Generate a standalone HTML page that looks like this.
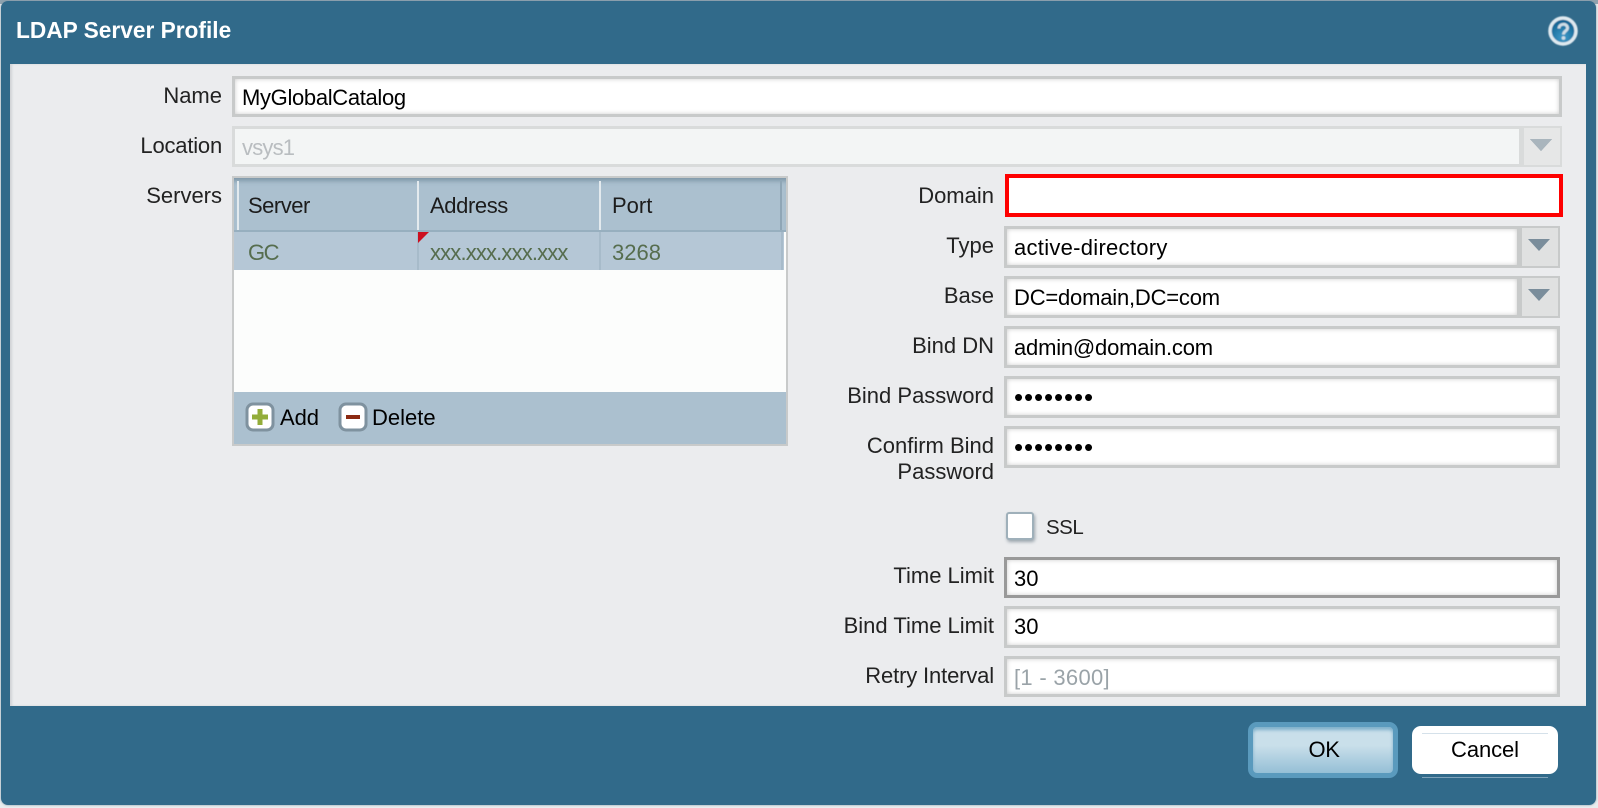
<!DOCTYPE html>
<html><head><meta charset="utf-8"><title>LDAP Server Profile</title>
<style>
html,body{margin:0;padding:0;width:1598px;height:808px;overflow:hidden;background:#e9edee}
*{box-sizing:border-box}
body{font-family:"Liberation Sans",sans-serif;font-size:22px;color:#222}
#top{position:absolute;left:0;top:0;width:1598px;height:4px;background:#8fa2ae}
#dlg{position:absolute;left:1px;top:1px;width:1595px;height:804px;background:#316a8a;border-radius:7px;box-shadow:0 0 2px #7f97a8}
#wrap{position:absolute;left:-1px;top:-1px;width:1598px;height:808px}
#content{position:absolute;left:10px;top:64px;width:1576px;height:642px;background:#ebecee;box-shadow:inset 2px 0 2px #d0d3d6}
.a{position:absolute;white-space:nowrap}
.t{position:absolute;left:16px;top:16px;color:#fff;font-weight:bold;font-size:22.7px;line-height:28px}
.l{position:absolute;text-align:right;line-height:26px;color:#222}
.i{position:absolute;background:#fff;border:3px solid #c8caca;box-shadow:inset 0 0 5px #ccc;line-height:37px;padding-left:7px;color:#000}
.b{position:absolute;background:#e0e1e1;border:2px solid #c8caca;border-left-width:3px}
.b:after{content:"";position:absolute;left:6px;top:11px;border-left:11px solid transparent;border-right:11px solid transparent;border-top:12px solid #7a8d9b}
.dots{letter-spacing:.9px;font-size:26px;line-height:35px}
</style></head><body>
<div id="top"></div>
<div id="dlg"><div id="wrap">
<div class="t">LDAP Server Profile</div>
<svg class="a" style="left:1547px;top:15px" width="32" height="32" viewBox="0 0 32 32"><defs><radialGradient id="g" cx=".5" cy=".75" r=".7"><stop offset="0" stop-color="#3f9bc9"/><stop offset="1" stop-color="#0d5d8c"/></radialGradient><filter id="bl"><feGaussianBlur stdDeviation=".5"/></filter></defs><g filter="url(#bl)"><circle cx="16" cy="16" r="13" fill="url(#g)" stroke="#dfe9ef" stroke-width="3.500"/><path d="M12 13.500c0-5.500 8.500-5.500 8.500-.5 0 3-4 3-4 6.500" fill="none" stroke="#cfdde6" stroke-width="3"/><circle cx="16.500" cy="23" r="1.900" fill="#cfdde6"/></g></svg>
<div id="content"></div>

<div class="l" style="right:1376px;top:83px">Name</div>
<div class="i" style="left:232px;top:76px;width:1330px;height:41px;line-height:38px;letter-spacing:-.33px">MyGlobalCatalog</div>

<div class="l" style="right:1376px;top:133px;letter-spacing:-.2px">Location</div>
<div class="i" style="left:232px;top:126px;width:1290px;height:41px;background:#f3f5f5;color:#b9bdc0;border-color:#d9dbdb;box-shadow:none;line-height:38px;letter-spacing:-.8px">vsys1</div>
<div class="b" style="left:1521px;top:126px;width:41px;height:41px;border-color:#d9dbdb;background:#e6e7e7"></div>
<div class="a" style="left:1530px;top:139px;width:0;height:0;border-left:11px solid transparent;border-right:11px solid transparent;border-top:12px solid #a9b5bd"></div>

<div class="l" style="right:1376px;top:183px">Servers</div>

<div class="a" style="left:232px;top:176px;width:556px;height:270px;background:#fcfdfc;border:2px solid #c8caca">
  <div class="a" style="left:0;top:0;width:552px;height:54px;background:#abc0cf;box-shadow:inset 0 6px 5px -3px #7f97a8;border-bottom:2px solid #97afbf"></div>
  <div class="a" style="left:3px;top:3px;width:2px;height:49px;background:#e3eaee"></div>
  <div class="a" style="left:183px;top:3px;width:2px;height:49px;background:#e3eaee"></div>
  <div class="a" style="left:365px;top:3px;width:2px;height:49px;background:#e3eaee"></div>
  <div class="a" style="left:546px;top:3px;width:2px;height:49px;background:#8fa6b6"></div>
  <div class="a" style="left:14px;top:13px;line-height:30px;color:#1c1c1c;letter-spacing:-.5px">Server</div>
  <div class="a" style="left:196px;top:13px;line-height:30px;color:#1c1c1c;letter-spacing:-.4px">Address</div>
  <div class="a" style="left:378px;top:13px;line-height:30px;color:#1c1c1c">Port</div>
  <div class="a" style="left:0;top:54px;width:550px;height:38px;background:#b5c7d6"></div>
  <div class="a" style="left:183px;top:54px;width:2px;height:38px;background:#a7bbca"></div>
  <div class="a" style="left:365px;top:54px;width:2px;height:38px;background:#a7bbca"></div>
  <div class="a" style="left:547px;top:54px;width:2px;height:38px;background:#a7bbca"></div>
  <div class="a" style="left:184px;top:54px;width:0;height:0;border-top:11px solid #cc0f1f;border-right:11px solid transparent"></div>
  <div class="a" style="left:14px;top:60px;line-height:30px;color:#566d4e;letter-spacing:-1.5px">GC</div>
  <div class="a" style="left:196px;top:60px;line-height:30px;color:#566d4e;letter-spacing:-.85px">xxx.xxx.xxx.xxx</div>
  <div class="a" style="left:378px;top:60px;line-height:30px;color:#566d4e">3268</div>
  <div class="a" style="left:0;top:214px;width:552px;height:52px;background:#abc0cf"></div>
  <svg class="a" style="left:11px;top:224px" width="30" height="30" viewBox="0 0 30 30"><rect x="2" y="2" width="26" height="26" rx="6" fill="#fff" stroke="#7f929f" stroke-width="3"/><path d="M15 7v16M7 15h16" stroke="#93ad3a" stroke-width="5"/></svg>
  <div class="a" style="left:46px;top:226px;line-height:28px;color:#000;letter-spacing:-.1px">Add</div>
  <svg class="a" style="left:104px;top:224px" width="30" height="30" viewBox="0 0 30 30"><rect x="2" y="2" width="26" height="26" rx="6" fill="#fff" stroke="#7f929f" stroke-width="3"/><path d="M8 15h14" stroke="#8c2a12" stroke-width="4"/></svg>
  <div class="a" style="left:138px;top:226px;line-height:28px;color:#000">Delete</div>
</div>

<div class="l" style="right:604px;top:183px">Domain</div>
<div class="a" style="left:1005px;top:174px;width:558px;height:43px;background:#fff;border:4px solid #fe0000"></div>

<div class="l" style="right:604px;top:233px">Type</div>
<div class="i" style="left:1004px;top:226px;width:516px;height:42px;letter-spacing:.28px">active-directory</div>
<div class="b" style="left:1519px;top:226px;width:41px;height:42px"></div>

<div class="l" style="right:604px;top:283px">Base</div>
<div class="i" style="left:1004px;top:276px;width:516px;height:42px;line-height:38px;letter-spacing:-.2px">DC=domain,DC=com</div>
<div class="b" style="left:1519px;top:276px;width:41px;height:42px"></div>

<div class="l" style="right:604px;top:333px">Bind DN</div>
<div class="i" style="left:1004px;top:326px;width:556px;height:42px;letter-spacing:-.2px">admin@domain.com</div>

<div class="l" style="right:604px;top:383px">Bind Password</div>
<div class="i dots" style="left:1004px;top:376px;width:556px;height:42px;line-height:36px">••••••••</div>

<div class="l" style="right:604px;top:433px">Confirm Bind<br>Password</div>
<div class="i dots" style="left:1004px;top:426px;width:556px;height:42px;line-height:36px">••••••••</div>

<div class="a" style="left:1006px;top:512px;width:28px;height:28px;background:#fff;border:2px solid #9fb0ba;border-radius:3px;box-shadow:1px 2px 3px #9aa5ad"></div>
<div class="a" style="left:1046px;top:514px;line-height:28px;font-size:20.5px;letter-spacing:-.5px">SSL</div>

<div class="l" style="right:604px;top:563px">Time Limit</div>
<div class="i" style="left:1004px;top:557px;width:556px;height:41px;border-color:#999">30</div>

<div class="l" style="right:604px;top:613px">Bind Time Limit</div>
<div class="i" style="left:1004px;top:606px;width:556px;height:42px;line-height:36px">30</div>

<div class="l" style="right:604px;top:663px;letter-spacing:-.15px">Retry Interval</div>
<div class="i" style="left:1004px;top:656px;width:556px;height:41px;color:#9aa3a8;letter-spacing:.3px">[1 - 3600]</div>

<div class="a" style="left:1248px;top:722px;width:150px;height:56px;border-radius:9px;background:linear-gradient(#c9dfea,#c9dfea 40%,#95bfd6);border:5px solid #5a9abd;text-align:center;line-height:45px;color:#000;box-shadow:inset 0 3px 3px #7fb0cb;padding-left:2px;letter-spacing:-.4px">OK</div>
<div class="a" style="left:1412px;top:726px;width:146px;height:48px;border-radius:9px;background:#fff;text-align:center;line-height:47px;color:#000;letter-spacing:-.1px">Cancel</div>
<div class="a" style="left:1422px;top:733px;width:126px;height:1px;background:#d5e1ea"></div>
<div class="a" style="left:1422px;top:777px;width:126px;height:1px;background:#7fa3ba"></div>
</div></div>
</body></html>
